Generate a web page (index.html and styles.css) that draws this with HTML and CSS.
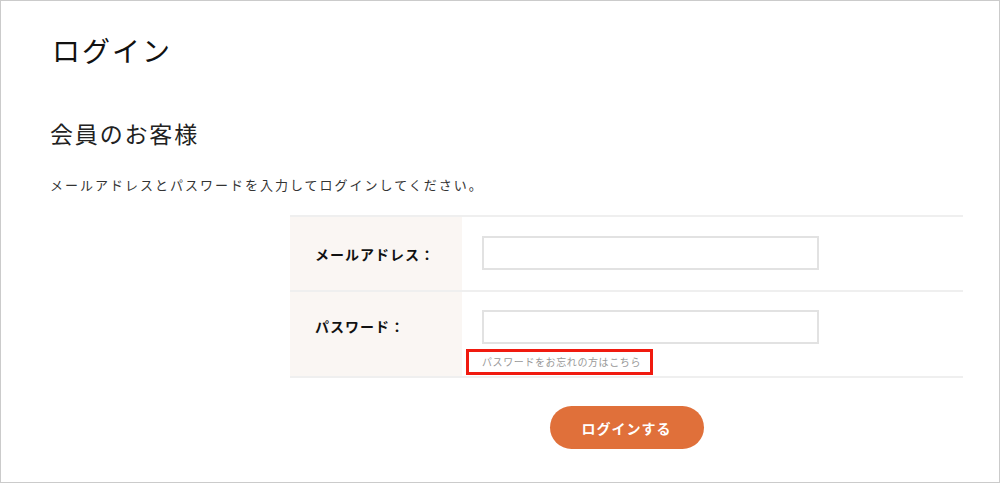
FILE: index.html
```html
<!DOCTYPE html>
<html lang="ja">
<head>
<meta charset="utf-8">
<title>ログイン</title>
<link rel="stylesheet" href="styles.css">
</head>
<body>
<div class="page">
  <h1 class="title">ログイン</h1>
  <h2 class="subtitle">会員のお客様</h2>
  <p class="lead">メールアドレスとパスワードを入力してログインしてください。</p>
  <div class="form">
    <div class="row">
      <div class="label">メールアドレス：</div>
      <div class="field"><input class="input" type="text"></div>
    </div>
    <div class="row row-pass">
      <div class="label">パスワード：</div>
      <div class="field">
        <input class="input" type="password">
        <a class="forgot" href="#">パスワードをお忘れの方はこちら<span class="mark"></span></a>
      </div>
    </div>
  </div>
  <div class="actions">
    <button class="btn" type="button">ログインする</button>
  </div>
</div>
</body>
</html>
```

FILE: styles.css
```css
* { box-sizing: border-box; }
html, body { margin: 0; padding: 0; background: #fff; }
body {
  font-family: "Noto Sans CJK JP", "Noto Sans", sans-serif;
  color: #222;
}
.page {
  width: 1000px;
  height: 483px;
  border: 1px solid #cbcbcb;
  padding-left: 49px;
  overflow: hidden;
}
.title {
  margin: 0;
  padding: 29px 0 0 2px;
  font-size: 28px;
  line-height: 40px;
  font-weight: 400;
  letter-spacing: 0.07em;
  color: #111;
}
.subtitle {
  margin: 46px 0 0;
  font-size: 23px;
  line-height: 34px;
  font-weight: 400;
  letter-spacing: 0.08em;
  color: #222;
}
.lead {
  margin: 25px 0 0;
  font-size: 13px;
  line-height: 20px;
  letter-spacing: 2px;
  color: #333;
}
.form {
  margin: 20px 0 0 240px;
  width: 673px;
  border-top: 2px solid #efefef;
}
.row {
  display: flex;
  border-bottom: 2px solid #efefef;
}
.label {
  width: 172px;
  flex: none;
  background: #faf6f3;
  padding: 0 0 0 25px;
  display: flex;
  align-items: center;
  font-size: 14px;
  font-weight: 700;
  letter-spacing: 1px;
  color: #111;
}
.row-pass .label {
  align-items: flex-start;
  padding-top: 24px;
}
.field {
  flex: 1;
  padding: 19px 0 20px 20px;
}
.row-pass .field {
  padding: 18px 0 5px 20px;
}
.input {
  display: block;
  width: 337px;
  height: 34px;
  border: 2px solid #e2e2e2;
  background: #fff;
  margin: 0;
  padding: 0 8px;
  font: inherit;
}
.forgot {
  position: relative;
  display: inline-block;
  margin-top: 11px;
  font-size: 10px;
  line-height: 14px;
  letter-spacing: 0.6px;
  color: #999;
  text-decoration: none;
}
.mark {
  position: absolute;
  left: -16px;
  top: -6px;
  width: 187px;
  height: 26px;
  border: 3px solid #f01a0f;
}
.actions {
  margin: 28px 0 0 240px;
  width: 673px;
  display: flex;
  justify-content: center;
}
.btn {
  width: 154px;
  height: 43px;
  border: 0;
  border-radius: 22px;
  background: #e0703a;
  color: #fff;
  font-family: inherit;
  font-size: 14px;
  font-weight: 700;
  letter-spacing: 1px;
  padding: 0;
}
```
